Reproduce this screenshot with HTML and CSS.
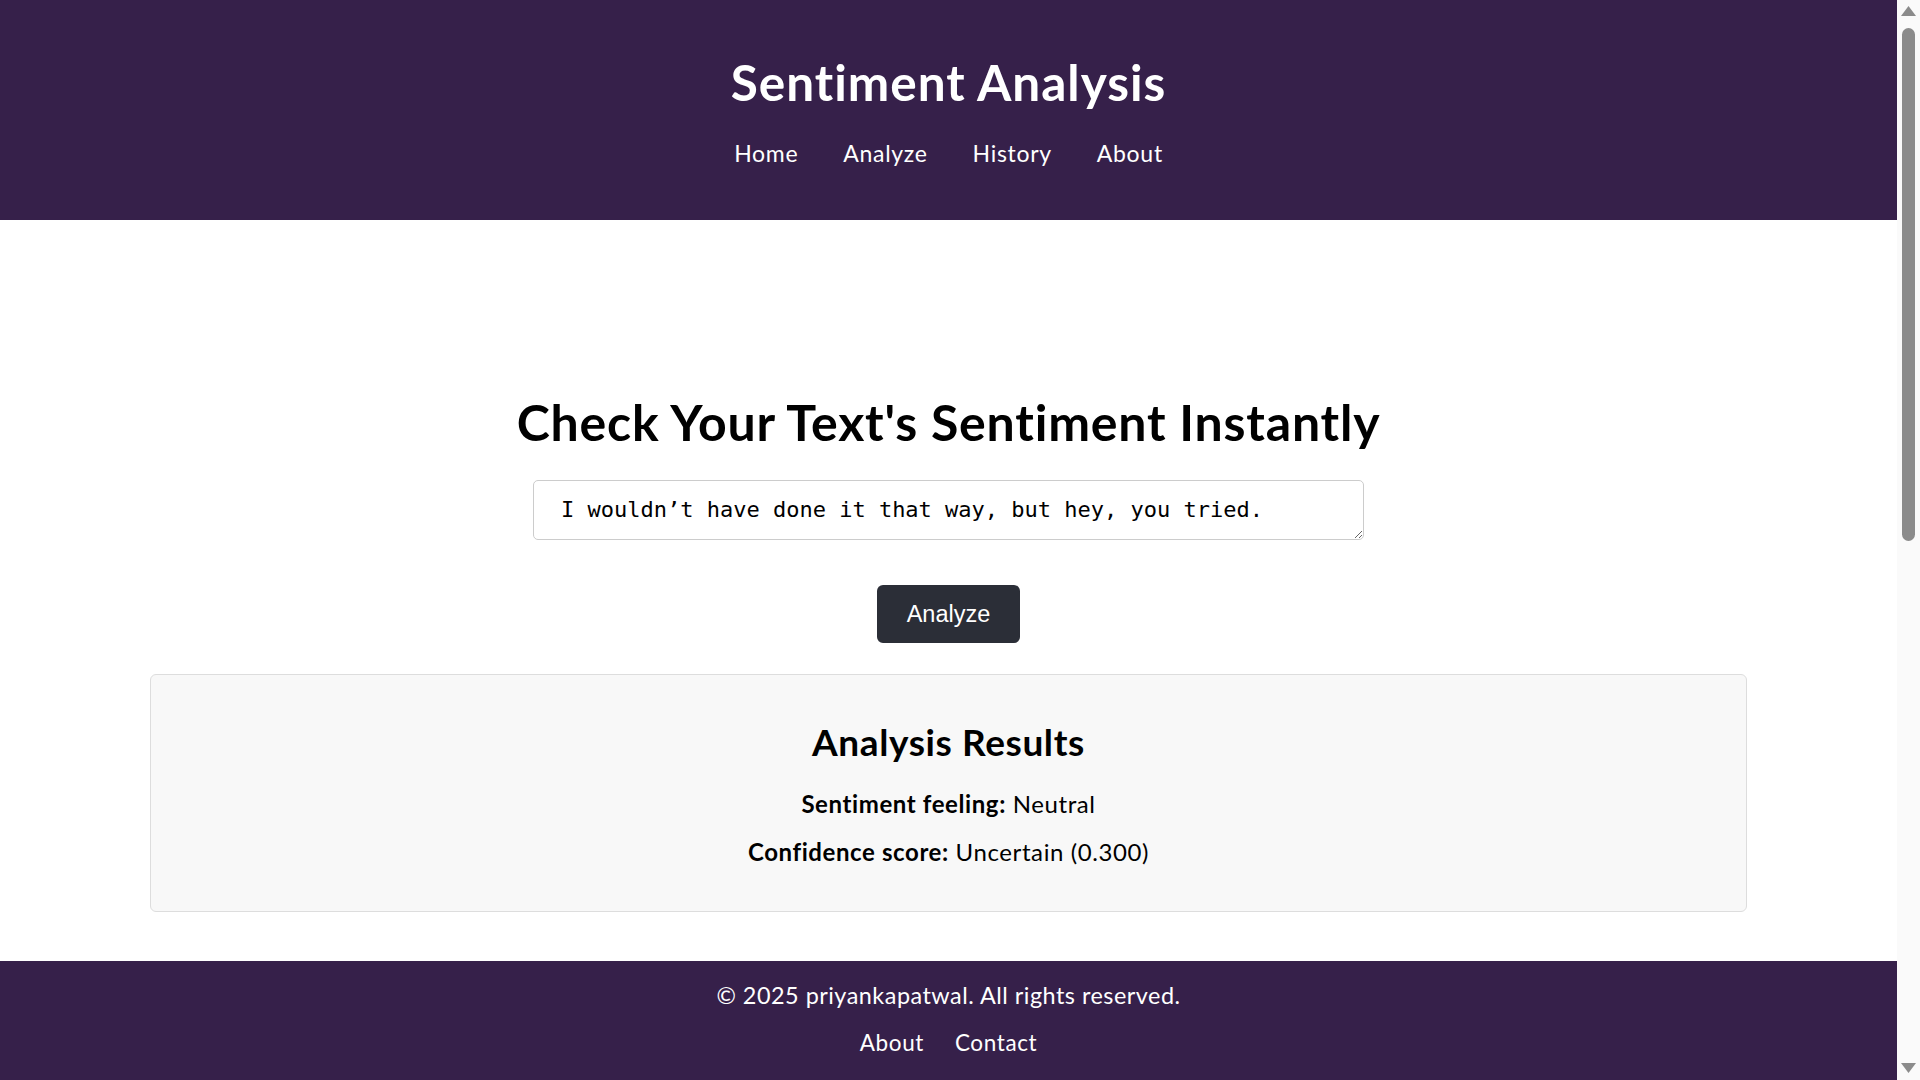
FILE: index.html
```html
<!DOCTYPE html>
<html lang="en">
<head>
<meta charset="UTF-8">
<title>Sentiment Analysis</title>
<link rel="stylesheet" href="styles.css">
</head>
<body>
<div class="page">
  <header class="site-header">
    <h1 class="site-title">Sentiment Analysis</h1>
    <nav class="site-nav">
      <a href="#" class="nav-link">Home</a>
      <a href="#" class="nav-link">Analyze</a>
      <a href="#" class="nav-link">History</a>
      <a href="#" class="nav-link">About</a>
    </nav>
  </header>

  <main class="main">
    <h2 class="main-title">Check Your Text's Sentiment Instantly</h2>
    <form class="analyze-form">
      <textarea class="text-input" rows="1">I wouldn’t have done it that way, but hey, you tried.</textarea>
      <button type="button" class="analyze-btn">Analyze</button>
    </form>
    <section class="results">
      <h3 class="results-title">Analysis Results</h3>
      <p class="result-line"><strong>Sentiment feeling:</strong> Neutral</p>
      <p class="result-line"><strong>Confidence score:</strong> Uncertain (0.300)</p>
    </section>
  </main>

  <footer class="site-footer">
    <p class="copyright">© 2025 priyankapatwal. All rights reserved.</p>
    <div class="footer-links">
      <a href="#" class="footer-link">About</a>
      <a href="#" class="footer-link">Contact</a>
    </div>
  </footer>
</div>

<div class="scrollbar" aria-hidden="true">
  <svg class="scroll-arrow" width="15" height="10" viewBox="0 0 15 10"><path d="M7.5 0 L15 10 L0 10 Z" fill="#8b8b8b"/></svg>
  <div class="scroll-track">
    <div class="scroll-thumb"></div>
  </div>
  <svg class="scroll-arrow" width="15" height="10" viewBox="0 0 15 10"><path d="M0 0 L15 0 L7.5 10 Z" fill="#8b8b8b"/></svg>
</div>
</body>
</html>
```

FILE: styles.css
```css
* {
  box-sizing: border-box;
}

html,
body {
  margin: 0;
  background: #ffffff;
}

body {
  font-family: Lato, "Noto Sans", sans-serif;
  color: #000;
  overflow: hidden;
}

.page {
  margin-right: 23px;
}

/* Browser scrollbar overlay on the right edge */
.scrollbar {
  position: fixed;
  top: 0;
  right: 0;
  width: 23px;
  height: 100vh;
  background: #fafafa;
  display: flex;
  flex-direction: column;
  align-items: center;
  padding: 6px 0 7px;
}

.scroll-arrow {
  flex: none;
  display: block;
}

.scroll-track {
  flex: 1;
  width: 100%;
  display: flex;
  justify-content: center;
  padding-top: 12px;
}

.scroll-thumb {
  width: 13px;
  height: 513px;
  background: #8b8b8b;
  border-radius: 7px;
}

.site-header {
  background: #36204a;
  color: #fff;
  padding: 55px 0 54px;
  text-align: center;
}

.site-title {
  margin: 0;
  font-size: 49.5px;
  line-height: 55px;
  font-weight: 700;
  letter-spacing: 1px;
}

.site-nav {
  margin-top: 30px;
  display: flex;
  justify-content: center;
  gap: 45px;
  line-height: 26px;
}

.nav-link {
  color: #fff;
  text-decoration: none;
  font-size: 23px;
  letter-spacing: 0.7px;
}

.main {
  padding-top: 175px;
  display: flex;
  flex-direction: column;
  align-items: center;
}

.main-title {
  margin: 0;
  font-size: 50px;
  line-height: 55px;
  font-weight: 700;
  letter-spacing: 0.8px;
}

.analyze-form {
  display: flex;
  flex-direction: column;
  align-items: center;
}

.text-input {
  margin-top: 30px;
  width: 831px;
  height: 60px;
  padding: 16px 27px;
  border: 1px solid #cccccc;
  border-radius: 5px;
  font-family: "DejaVu Sans Mono", monospace;
  font-size: 22px;
  color: #000;
  background: #fff;
  outline: none;
}

.analyze-btn {
  margin-top: 45px;
  padding: 15px 30px;
  height: 58px;
  border: none;
  border-radius: 6px;
  background: #2b2e37;
  color: #fff;
  font-family: "Liberation Sans", Arial, sans-serif;
  font-size: 23.5px;
  line-height: 27px;
  cursor: pointer;
}

.results {
  box-sizing: content-box;
  margin-top: 31px;
  width: 80%;
  padding: 47px 39px 47px;
  background: #f8f8f8;
  border: 1px solid #dddddd;
  border-radius: 6px;
  text-align: center;
}

.results-title {
  margin: 0;
  font-size: 37px;
  line-height: 40px;
  font-weight: 700;
  letter-spacing: 0.6px;
}

.result-line {
  margin: 29px 0 0;
  font-size: 24px;
  line-height: 25px;
  letter-spacing: 0.6px;
}

.result-line + .result-line {
  margin-top: 23px;
}

.site-footer {
  margin-top: 49px;
  background: #36204a;
  color: #fff;
  padding: 22px 0 60px;
  text-align: center;
}

.copyright {
  margin: 0;
  font-size: 23.4px;
  line-height: 25px;
  letter-spacing: 0.5px;
}

.footer-links {
  margin-top: 22px;
  display: flex;
  justify-content: center;
  gap: 31px;
  line-height: 25px;
}

.footer-link {
  color: #fff;
  text-decoration: none;
  font-size: 22.5px;
  letter-spacing: 0.6px;
}
```
